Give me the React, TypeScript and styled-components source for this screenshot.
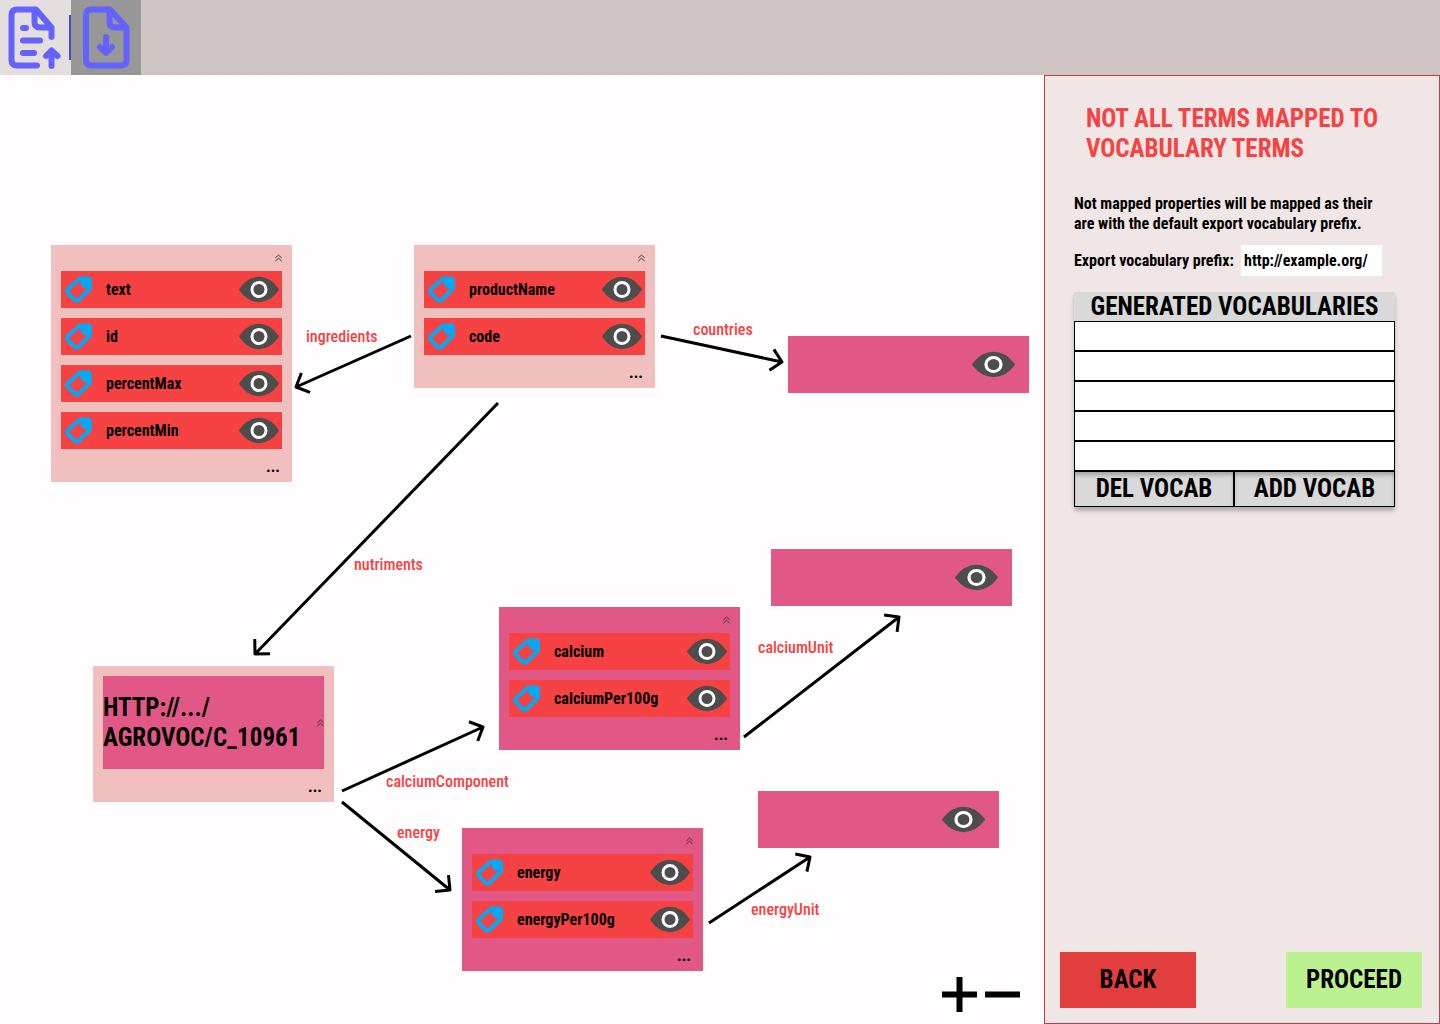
import React from "react";
import styled, { createGlobalStyle } from "styled-components";

const GlobalStyle = createGlobalStyle`
  *, *::before, *::after { box-sizing: border-box; }
  body {
    margin: 0;
    background: #fffdfe;
    color: #000;
    font-family: "Saira Extra Condensed", "Roboto Condensed", "Liberation Sans Narrow", "Liberation Sans", sans-serif;
    font-size: 16px;
    line-height: 20px;
  }
  button, input { font: inherit; color: inherit; border: 0; padding: 0; }
  button { cursor: pointer; background: none; }
`;

const Page = styled.div`
  display: flex;
  flex-direction: column;
  min-height: 100vh;
`;

const Toolbar = styled.header`
  display: flex;
  height: 75px;
  background: #cec4c3;
`;

const ToolButton = styled.button<{ $active?: boolean }>`
  display: flex;
  width: ${(p) => (p.$active ? 70 : 71)}px;
  height: 75px;
  background: ${(p) => (p.$active ? "#979797" : "#e4dedf")};
`;

const ToolIcon = styled.svg`
  display: block;
  width: 100%;
  height: 75px;
  fill: none;
  stroke: #6563ff;
  stroke-width: 6;
  stroke-linecap: round;
  stroke-linejoin: round;
`;

const Workspace = styled.div`
  display: flex;
  flex: 1;
`;

const Canvas = styled.main`
  position: relative;
  flex: 1;
  min-width: 0;
  overflow: hidden;
`;

const Edges = styled.svg`
  position: absolute;
  inset: 0;
  width: 100%;
  height: 100%;
  fill: none;
  stroke: #000;
  stroke-width: 3;
  stroke-linejoin: round;
`;

const EdgeLabel = styled.span<{ $x: number; $y: number }>`
  position: absolute;
  left: ${(p) => p.$x}px;
  top: ${(p) => p.$y}px;
  color: #f64242;
  font-weight: 500;
`;

type Tone = "light" | "strong";

const Node = styled.section<{ $x: number; $y: number; $tone: Tone }>`
  position: absolute;
  left: ${(p) => p.$x}px;
  top: ${(p) => p.$y}px;
  width: 241px;
  padding: 0 10px;
  background: ${(p) => (p.$tone === "light" ? "#f1bfbd" : "#e15886")};
`;

const NodeTop = styled.div`
  display: flex;
  justify-content: flex-end;
  align-items: center;
  height: 26px;
`;

const NodeBottom = styled.div`
  display: flex;
  justify-content: flex-end;
  height: 33px;
  padding: 8px 2px 0 0;
`;

const IconButton = styled.button`
  display: flex;
  align-items: center;
`;

const MoreButton = styled.button`
  height: 20px;
  font-weight: 700;
`;

const Properties = styled.ul`
  display: grid;
  gap: 10px;
  margin: 0;
  padding: 0;
  list-style: none;
`;

const Property = styled.li`
  display: flex;
  align-items: center;
  height: 37px;
  padding: 0 3px 0 4px;
  background: #f64242;
`;

const PropertyName = styled.span`
  flex: 1;
  margin-left: 13px;
  font-weight: 700;
`;

const ClassName = styled.div`
  display: flex;
  align-items: center;
  justify-content: space-between;
  height: 93px;
  margin-top: 10px;
  background: #e15886;
  font-size: 25px;
  font-weight: 700;
  line-height: 30px;
`;

const EmptyNode = styled(Node)`
  display: flex;
  align-items: center;
  justify-content: flex-end;
  height: 57px;
  padding: 0 14px;
`;

const Zoom = styled.div`
  position: absolute;
  right: 24px;
  bottom: 12px;
  display: flex;
  gap: 8px;
`;

const Panel = styled.aside`
  display: flex;
  flex-direction: column;
  width: 396px;
  padding: 28px 17px 15px 15px;
  border: 1px solid #c13f42;
  background: #f0e6e6;
`;

const PanelBody = styled.div`
  flex: 1;
  padding: 0 27px 0 14px;
`;

const Title = styled.h1`
  margin: 0 0 30px 12px;
  color: #f64242;
  font-size: 25px;
  font-weight: 700;
  line-height: 30px;
  white-space: nowrap;
`;

const Note = styled.p`
  margin: 0 0 11px;
  font-weight: 700;
  white-space: nowrap;
`;

const PrefixRow = styled.div`
  display: flex;
  align-items: center;
  justify-content: space-between;
  margin: 0 13px 16px 0;
  font-weight: 700;
`;

const PrefixInput = styled.input`
  width: 141px;
  height: 31px;
  padding: 0 3px;
  background: #fff;
`;

const VocabBox = styled.div`
  box-shadow: 0 4px 4px rgba(0, 0, 0, 0.25);
`;

const VocabTable = styled.table`
  width: 100%;
  border-spacing: 0;
  background: #fff;

  th {
    height: 29px;
    padding: 0;
    background: #d9d9d9;
    font-size: 25px;
    line-height: 29px;
    white-space: nowrap;
  }

  td {
    height: 30px;
    padding: 0;
    border: 1px solid #000;
  }
`;

const VocabActions = styled.div`
  display: grid;
  grid-template-columns: 160px 1fr;
`;

const VocabButton = styled.button`
  height: 36px;
  border: 1px solid #000;
  background: #d9d9d9;
  box-shadow: inset 0 4px 4px -1px rgba(0, 0, 0, 0.25);
  font-size: 25px;
  font-weight: 700;
  line-height: 30px;
`;

const Footer = styled.footer`
  display: flex;
  justify-content: space-between;
`;

const FooterButton = styled.button<{ $kind: "back" | "proceed" }>`
  width: 136px;
  height: 56px;
  background: ${(p) => (p.$kind === "back" ? "#e33e3e" : "#bbf18f")};
  font-size: 25px;
  font-weight: 700;
`;

const TagIcon = () => (
  <svg width="28" height="28" viewBox="0 0 28 28" aria-hidden="true">
    <path d="M15 2.500H23Q25 2.500 25 4.500V12.500L13.500 24Q11.700 25.500 10 24L2.800 16.800Q1.300 15 2.800 13.300Z" fill="none" stroke="#03a9f4" strokeWidth="4" strokeLinejoin="round" />
    <circle cx="21" cy="6.500" r="5.500" fill="#03a9f4" />
  </svg>
);

const EyeIcon = ({ width = 40 }: { width?: number }) => (
  <svg width={width} height="27" viewBox="0 0 40 27" preserveAspectRatio="none" aria-hidden="true">
    <path d="M0.500 12.500Q9 0.800 20 0.800T39.500 12.500Q40.300 13.500 39.500 14.500Q31 26.200 20 26.200T0.500 14.500Q-0.300 13.500 0.500 12.500Z" fill="#4d4d4d" />
    <circle cx="20" cy="13.500" r="7" fill="none" stroke="#fff" strokeWidth="3" />
  </svg>
);

const CollapseIcon = () => (
  <svg width="7" height="8" viewBox="0 0 7 8" fill="none" stroke="#49383a" strokeWidth="1" aria-hidden="true">
    <path d="M0.300 4L3.500 1L6.700 4M0.300 7.200L3.500 4.200L6.700 7.200" />
  </svg>
);

type NodeData = { x: number; y: number; tone: Tone; properties: string[] };

const nodes: NodeData[] = [
  { x: 51, y: 170, tone: "light", properties: ["text", "id", "percentMax", "percentMin"] },
  { x: 414, y: 170, tone: "light", properties: ["productName", "code"] },
  { x: 499, y: 532, tone: "strong", properties: ["calcium", "calciumPer100g"] },
  { x: 462, y: 753, tone: "strong", properties: ["energy", "energyPer100g"] },
];

const emptyNodes = [
  { x: 788, y: 261 },
  { x: 771, y: 474 },
  { x: 758, y: 716 },
];

type Point = [number, number];

const edges: { from: Point; to: Point; label: string; at: Point }[] = [
  { from: [411, 261], to: [296, 312], label: "ingredients", at: [306, 252] },
  { from: [661, 261], to: [782, 287], label: "countries", at: [693, 245] },
  { from: [498, 328], to: [255, 579], label: "nutriments", at: [354, 480] },
  { from: [342, 716], to: [483, 652], label: "calciumComponent", at: [386, 697] },
  { from: [342, 727], to: [450, 815], label: "energy", at: [397, 748] },
  { from: [744, 662], to: [899, 542], label: "calciumUnit", at: [758, 563] },
  { from: [709, 848], to: [810, 782], label: "energyUnit", at: [751, 825] },
];

// A straight shaft closed by two 15px strokes, 45 degrees to either side of it.
function arrowPath([x1, y1]: Point, [x2, y2]: Point) {
  const angle = Math.atan2(y2 - y1, x2 - x1);
  const wing = (turn: number) =>
    `${x2 - 15 * Math.cos(angle + turn)} ${y2 - 15 * Math.sin(angle + turn)}`;
  return `M${x1} ${y1}L${x2} ${y2}M${wing(Math.PI / 4)}L${x2} ${y2}L${wing(-Math.PI / 4)}`;
}

const NodeCard = ({ x, y, tone, properties }: NodeData) => (
  <Node $x={x} $y={y} $tone={tone}>
    <NodeTop>
      <IconButton aria-label="Collapse"><CollapseIcon /></IconButton>
    </NodeTop>
    <Properties>
      {properties.map((name) => (
        <Property key={name}>
          <TagIcon />
          <PropertyName>{name}</PropertyName>
          <IconButton aria-label={`Toggle ${name}`}><EyeIcon /></IconButton>
        </Property>
      ))}
    </Properties>
    <NodeBottom><MoreButton>...</MoreButton></NodeBottom>
  </Node>
);

export default function App() {
  return (
    <Page>
      <GlobalStyle />
      <Toolbar>
        <ToolButton aria-label="Upload file">
          <ToolIcon viewBox="0 0 71 75">
            <path d="M51.500 37V27.500L36 9.500H17Q11.500 9.500 11.500 15V60Q11.500 65.500 17 65.500H37M34.500 10V22Q34.500 27.500 40 27.500H51M23 28H26M23 40.500H40M23 53H34M51.500 66V51M46 56L51.500 50.500L57.500 56" />
            <path d="M70 15V60" stroke="#3d4fd0" strokeWidth="2" strokeLinecap="butt" />
          </ToolIcon>
        </ToolButton>
        <ToolButton $active aria-label="Download file">
          <ToolIcon viewBox="0 0 70 75">
            <path d="M55.500 28V60Q55.500 65.500 50 65.500H20.500Q15 65.500 15 60V15Q15 9.500 20.500 9.500H39L55.500 27.500H44Q38.500 27.500 38.500 22V10M35 37V52M29 47L35 53L41 47" />
          </ToolIcon>
        </ToolButton>
      </Toolbar>
      <Workspace>
        <Canvas>
          <Edges aria-hidden="true">
            {edges.map((e) => <path key={e.label} d={arrowPath(e.from, e.to)} />)}
          </Edges>
          {edges.map((e) => (
            <EdgeLabel key={e.label} $x={e.at[0]} $y={e.at[1]}>{e.label}</EdgeLabel>
          ))}
          {nodes.map((n) => <NodeCard key={n.properties[0]} {...n} />)}
          <Node $x={93} $y={591} $tone="light">
            <ClassName>
              <span>HTTP://.../<br />AGROVOC/C_10961</span>
              <IconButton aria-label="Collapse"><CollapseIcon /></IconButton>
            </ClassName>
            <NodeBottom><MoreButton>...</MoreButton></NodeBottom>
          </Node>
          {emptyNodes.map((n) => (
            <EmptyNode key={n.y} $x={n.x} $y={n.y} $tone="strong">
              <IconButton aria-label="Toggle node"><EyeIcon width={43} /></IconButton>
            </EmptyNode>
          ))}
          <Zoom>
            <IconButton aria-label="Zoom in">
              <svg width="35" height="35" viewBox="0 0 35 35" stroke="#000" strokeWidth="6"><path d="M17.500 0V35M0 17.500H35" /></svg>
            </IconButton>
            <IconButton aria-label="Zoom out">
              <svg width="35" height="35" viewBox="0 0 35 35" stroke="#000" strokeWidth="6"><path d="M0 17.500H35" /></svg>
            </IconButton>
          </Zoom>
        </Canvas>
        <Panel>
          <PanelBody>
            <Title>NOT ALL TERMS MAPPED TO<br />VOCABULARY TERMS</Title>
            <Note>Not mapped properties will be mapped as their<br />are with the default export vocabulary prefix.</Note>
            <PrefixRow>
              <label htmlFor="prefix">Export vocabulary prefix:</label>
              <PrefixInput id="prefix" defaultValue="http://example.org/" />
            </PrefixRow>
            <VocabBox>
              <VocabTable>
                <thead><tr><th>GENERATED VOCABULARIES</th></tr></thead>
                <tbody>
                  {[1, 2, 3, 4, 5].map((row) => <tr key={row}><td /></tr>)}
                </tbody>
              </VocabTable>
              <VocabActions>
                <VocabButton>DEL VOCAB</VocabButton>
                <VocabButton>ADD VOCAB</VocabButton>
              </VocabActions>
            </VocabBox>
          </PanelBody>
          <Footer>
            <FooterButton $kind="back">BACK</FooterButton>
            <FooterButton $kind="proceed">PROCEED</FooterButton>
          </Footer>
        </Panel>
      </Workspace>
    </Page>
  );
}
